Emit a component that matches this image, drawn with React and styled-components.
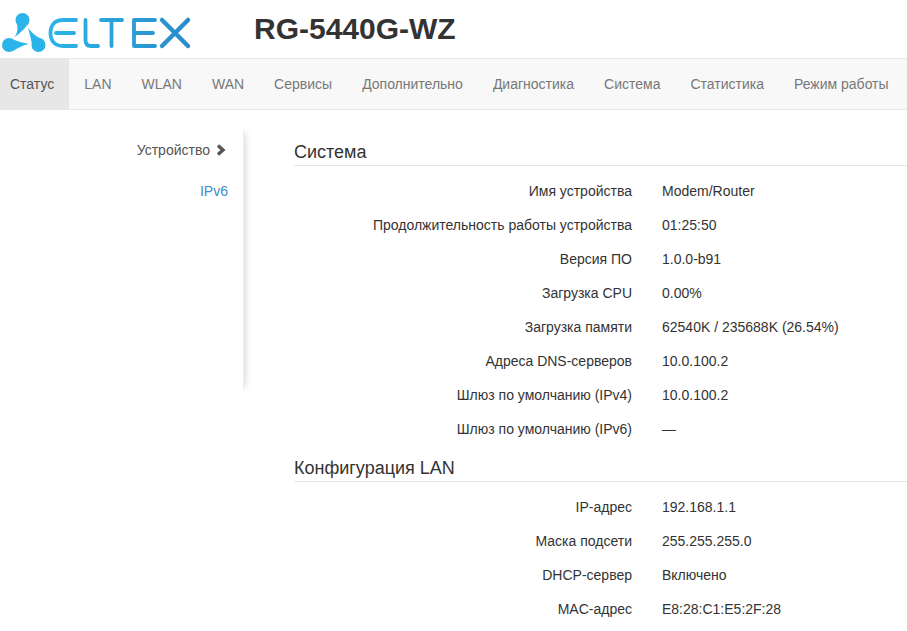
import React from "react";
import styled, { createGlobalStyle } from "styled-components";

const GlobalStyle = createGlobalStyle`
  html, body {
    margin: 0;
    background: #fff;
    font-family: "Liberation Sans", Arial, sans-serif;
    font-size: 14px;
    color: #333;
    overflow: hidden;
  }
`;

const tabs = ["Статус", "LAN", "WLAN", "WAN", "Сервисы", "Дополнительно", "Диагностика", "Система", "Статистика", "Режим работы"];

const system = [
  ["Имя устройства", "Modem/Router"],
  ["Продолжительность работы устройства", "01:25:50"],
  ["Версия ПО", "1.0.0-b91"],
  ["Загрузка CPU", "0.00%"],
  ["Загрузка памяти", "62540K / 235688K (26.54%)"],
  ["Адреса DNS-серверов", "10.0.100.2"],
  ["Шлюз по умолчанию (IPv4)", "10.0.100.2"],
  ["Шлюз по умолчанию (IPv6)", "—"],
];

const lan = [
  ["IP-адрес", "192.168.1.1"],
  ["Маска подсети", "255.255.255.0"],
  ["DHCP-сервер", "Включено"],
  ["MAC-адрес", "E8:28:C1:E5:2F:28"],
];

const Logo = () => (
  <svg width="192" height="50" viewBox="0 0 192 50" fill="none">
    <defs>
      <linearGradient id="word" gradientUnits="userSpaceOnUse" x1="48" y1="0" x2="190" y2="0">
        <stop offset="0" stopColor="#2ab5ea" />
        <stop offset="1" stopColor="#2b8bca" />
      </linearGradient>
    </defs>
    <g fill="#2ab4ea">
      <circle cx="22.500" cy="15" r="7" />
      <path d="M17 19 C18 24 17.500 28 14.500 32 C19 29 23 25.500 26.500 21 Z" />
      <circle cx="9" cy="40" r="7" />
      <path d="M12 34 C17 36 23 38 29 39 C23 40 18 43 13 46 Z" />
      <circle cx="38.500" cy="40" r="7" />
      <path d="M44 35 C38 33 32 28 28 23 C30 29 31.500 37 33 44 Z" />
    </g>
    <g stroke="url(#word)" strokeWidth="3.800" strokeLinecap="round" strokeLinejoin="round">
      <path d="M76 15 H63 C55 15 50.500 20 50.500 28 C50.500 36 55 41 63 41 H76 M56 28 H74" />
      <path d="M85.500 15 V35 C85.500 39 87.500 41 91 41 H98" />
      <path d="M101 15 H122 M111.500 15 V41" />
      <path d="M155 15 H134 V41 H155 M136 28 H153" />
      <path d="M162 15 L188 41 M188 15 L162 41" strokeWidth="4.500" />
    </g>
  </svg>
);

const App = () => (
  <>
    <GlobalStyle />
    <Header>
      <LogoBox>
        <Logo />
      </LogoBox>
      <Model>RG-5440G-WZ</Model>
    </Header>
    <Navbar>
      {tabs.map((tab, i) => (
        <Tab key={tab} $active={i === 0}>
          {tab}
        </Tab>
      ))}
    </Navbar>
    <Main>
      <Sidebar>
        <SideItem>
          Устройство
          <Chevron viewBox="0 0 11 12">
            <path d="M3 1.500 L8 6 L3 10.500" />
          </Chevron>
        </SideItem>
        <SideLink>IPv6</SideLink>
      </Sidebar>
      <Content>
        <Section>
          <SectionTitle>Система</SectionTitle>
          <Rows>
            {system.map(([label, value]) => (
              <Row key={label}>
                <Label>{label}</Label>
                <Value>{value}</Value>
              </Row>
            ))}
          </Rows>
        </Section>
        <Section>
          <SectionTitle>Конфигурация LAN</SectionTitle>
          <Rows>
            {lan.map(([label, value]) => (
              <Row key={label}>
                <Label>{label}</Label>
                <Value>{value}</Value>
              </Row>
            ))}
          </Rows>
        </Section>
      </Content>
    </Main>
  </>
);

const Header = styled.header`
  display: flex;
  align-items: center;
  height: 58px;
`;

const LogoBox = styled.div`
  display: flex;
  width: 254px;
  padding-top: 2px;
`;

const Model = styled.h1`
  margin: 0;
  font-size: 30px;
  font-weight: bold;
  color: #333;
`;

const Navbar = styled.nav`
  display: flex;
  height: 50px;
  background: #f8f8f8;
  border-top: 1px solid #e7e7e7;
  border-bottom: 1px solid #e7e7e7;
`;

const Tab = styled.a`
  padding: 0 15px;
  line-height: 50px;
  color: ${(p) => (p.$active ? "#555" : "#777")};
  background: ${(p) => (p.$active ? "#e7e7e7" : "transparent")};
  &:first-child {
    padding-left: 10px;
  }
`;

const Main = styled.main`
  display: flex;
  align-items: flex-start;
`;

const Sidebar = styled.aside`
  flex: none;
  box-sizing: border-box;
  width: 244px;
  height: 260px;
  margin-top: 20px;
  padding-top: 10px;
  border-right: 1px solid #eee;
  box-shadow: 5px 0 6px -3px rgba(0, 0, 0, 0.14);
  clip-path: inset(0 -12px 0 0);
  display: flex;
  flex-direction: column;
  align-items: flex-end;
  gap: 21px;
`;

const SideItem = styled.div`
  display: flex;
  align-items: center;
  gap: 5px;
  height: 20px;
  padding-right: 17px;
  color: #555;
`;

const Chevron = styled.svg`
  width: 11px;
  height: 12px;
  fill: none;
  stroke: #555;
  stroke-width: 3.4;
`;

const SideLink = styled.a`
  height: 20px;
  line-height: 20px;
  padding-right: 15px;
  color: #428bca;
`;

const Content = styled.div`
  flex: 1;
  margin-left: 50px;
  padding-top: 31px;
`;

const Section = styled.section`
  margin-bottom: 11px;
`;

const SectionTitle = styled.h4`
  margin: 0;
  height: 24px;
  font-size: 18px;
  font-weight: normal;
  line-height: 22px;
  color: #333;
  border-bottom: 1px solid #e5e5e5;
`;

const Rows = styled.div`
  padding-top: 8px;
`;

const Row = styled.div`
  display: grid;
  grid-template-columns: 338px 1fr;
  column-gap: 30px;
  height: 34px;
  line-height: 34px;
`;

const Label = styled.div`
  text-align: right;
`;

const Value = styled.div``;

export default App;
